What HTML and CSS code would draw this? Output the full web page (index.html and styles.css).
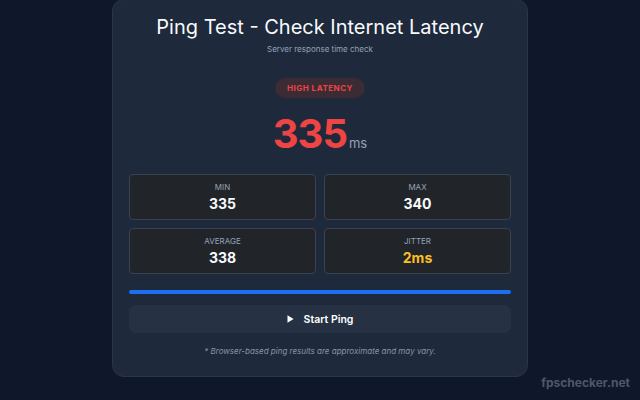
FILE: index.html
```html
<!DOCTYPE html>
<html>
<head>
<meta charset="utf-8">
<link rel="stylesheet" href="styles.css">
</head>
<body>
<div class="page">
  <div class="card">
    <h1 class="title">Ping Test - Check Internet Latency</h1>
    <p class="subtitle">Server response time check</p>
    <div class="badge-row"><span class="badge">HIGH LATENCY</span></div>
    <div class="reading"><span class="num">335</span><span class="unit">ms</span></div>
    <div class="stats">
      <div class="stat"><div class="label">MIN</div><div class="value">335</div></div>
      <div class="stat"><div class="label">MAX</div><div class="value">340</div></div>
      <div class="stat"><div class="label">AVERAGE</div><div class="value">338</div></div>
      <div class="stat"><div class="label">JITTER</div><div class="value warn">2ms</div></div>
    </div>
    <div class="progress"><div class="fill" style="width:100%"></div></div>
    <button class="btn"><svg class="play" width="7" height="8" viewBox="0 0 7 8"><path d="M0.5 0.3 L6.6 4 L0.5 7.7 Z" fill="#ffffff"/></svg><span>Start Ping</span></button>
    <p class="note">* Browser-based ping results are approximate and may vary.</p>
  </div>
</div>
<div class="brand">fpschecker.net</div>
</body>
</html>
```
FILE: styles.css
```css
* { box-sizing: border-box; }
html, body { margin: 0; padding: 0; }
body {
  width: 640px;
  height: 400px;
  background: #0f172a;
  font-family: Inter, "Noto Sans", sans-serif;
  overflow: hidden;
  position: relative;
}
.page {
  display: flex;
  justify-content: center;
}
.card {
  width: 416px;
  height: 378px;
  background: #1e293b;
  border: 1px solid #2a3547;
  border-radius: 12px;
  margin-top: -1px;
  padding: 14px 16px 0;
}
.title {
  margin: 0;
  text-align: center;
  color: #f8fafc;
  font-size: 20px;
  font-weight: 400;
  line-height: 26px;
}
.subtitle {
  margin: 4px 0 0;
  text-align: center;
  color: #94a3b8;
  font-size: 8px;
  line-height: 11px;
}
.badge-row {
  display: flex;
  justify-content: center;
  margin-top: 23px;
}
.badge {
  display: inline-block;
  background: #3a2b35;
  color: #ef4444;
  font-size: 8px;
  font-weight: 700;
  letter-spacing: 0.5px;
  line-height: 20px;
  height: 20px;
  padding: 0 12px;
  border-radius: 10px;
}
.reading {
  display: flex;
  justify-content: center;
  align-items: baseline;
  margin-top: 11px;
  height: 50px;
}
.num {
  color: #ef4444;
  font-size: 40px;
  font-weight: 700;
  letter-spacing: -1px;
  line-height: 50px;
}
.unit {
  color: #94a3b8;
  font-size: 13px;
  margin-left: 2px;
}
.stats {
  margin-top: 15px;
  display: grid;
  grid-template-columns: 1fr 1fr;
  gap: 8px;
}
.stat {
  height: 46px;
  background: #212529;
  border: 1px solid #3a4252;
  border-radius: 4px;
  display: flex;
  flex-direction: column;
  align-items: center;
  justify-content: center;
  padding-top: 1px;
}
.label {
  color: #94a3b8;
  font-size: 8px;
  line-height: 11px;
}
.value {
  color: #f8fafc;
  font-size: 14px;
  font-weight: 700;
  line-height: 18px;
  margin-top: 2px;
}
.value.warn { color: #fbbf24; }
.progress {
  margin-top: 16px;
  height: 4px;
  background: #334155;
  border-radius: 2px;
  overflow: hidden;
}
.fill { height: 100%; background: #1d6ff2; }
.btn {
  margin-top: 11px;
  width: 100%;
  height: 28px;
  border: none;
  border-radius: 7px;
  background: #263244;
  color: #ffffff;
  font-family: Inter, "Noto Sans", sans-serif;
  font-size: 10.5px;
  font-weight: 600;
  display: flex;
  align-items: center;
  justify-content: center;
  gap: 10px;
}
.play { display: block; }
.note {
  margin: 13px 0 0;
  text-align: center;
  color: #8a94a6;
  font-size: 8px;
  font-style: italic;
}
.brand {
  position: absolute;
  right: 10px;
  bottom: 10px;
  color: #4d586a;
  font-size: 12px;
  font-weight: 700;
}
```
